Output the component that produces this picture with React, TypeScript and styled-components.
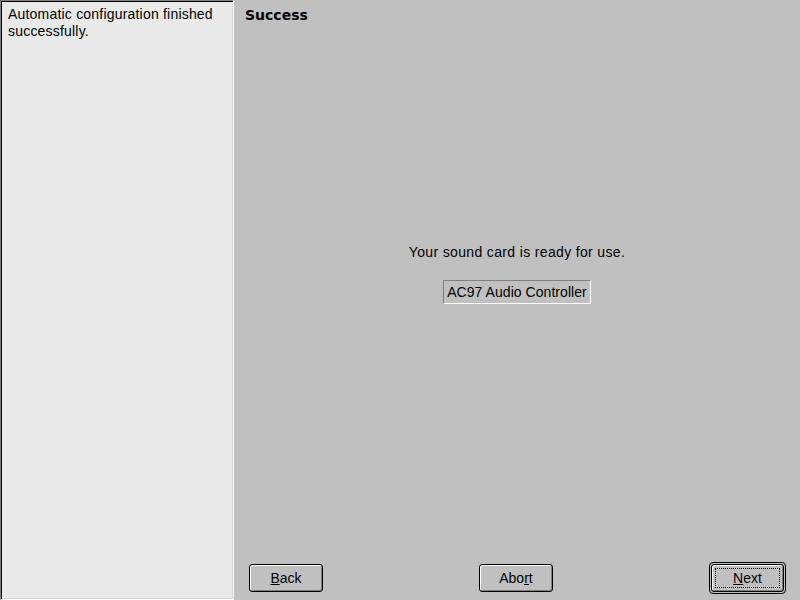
import React from "react";
import styled, { createGlobalStyle } from "styled-components";

const Global = createGlobalStyle`
  html, body { margin: 0; padding: 0; background: #c0c0c0; }
  body { font-family: "Liberation Sans", Arial, sans-serif; font-size: 14px; color: #000; }
`;

const Screen = styled.div`
  display: flex;
  width: 800px;
  height: 600px;
  overflow: hidden;
  background: #c0c0c0;
`;

const HelpPanel = styled.div`
  box-sizing: border-box;
  width: 234px;
  height: 600px;
  flex: none;
  background: #e9e9e9;
  border-top: 1px solid #808080;
  border-left: 1px solid #808080;
  border-bottom: 1px solid #fff;
  border-right: 1px solid #fff;
  box-shadow: inset 1px 1px 0 #000, inset -1px -1px 0 #d4d4d4;
  padding: 5px 7px;
  line-height: 17px;
  font-size: 14px;
  letter-spacing: 0.2px;
`;

const Main = styled.div`
  flex: 1;
  display: flex;
  flex-direction: column;
`;

const Title = styled.div`
  font-family: "DejaVu Sans", "Liberation Sans", sans-serif;
  font-weight: bold;
  font-size: 14px;
  padding: 7px 0 0 11px;
  height: 21px;
`;

const Middle = styled.div`
  flex: 1;
  display: flex;
  flex-direction: column;
  align-items: center;
  justify-content: center;
  padding-bottom: 36px;
  gap: 20px;
`;

const Message = styled.div`
  line-height: 16px;
  letter-spacing: 0.35px;
`;

const Field = styled.div`
  box-sizing: border-box;
  height: 24px;
  padding: 0 3px;
  line-height: 22px;
  border-top: 1px solid #808080;
  border-left: 1px solid #808080;
  border-bottom: 1px solid #fff;
  border-right: 1px solid #fff;
  white-space: nowrap;
  letter-spacing: 0.05px;
`;

const ButtonBar = styled.div`
  display: flex;
  justify-content: space-between;
  align-items: center;
  height: 44px;
  padding: 0 14px 0 15px;
  box-sizing: border-box;
`;

const DefaultRing = styled.div`
  box-sizing: border-box;
  border: 1px solid #000;
  border-radius: 4px;
  padding: 1px;
`;

const Button = styled.button<{ $w: number; $focus?: boolean }>`
  box-sizing: border-box;
  width: ${(p) => p.$w}px;
  height: 28px;
  padding: 0;
  background: #c0c0c0;
  border: 1px solid #000;
  border-radius: 3px;
  box-shadow: inset 1px 1px 0 #fff, inset -1px -1px 0 #808080;
  font-family: "Liberation Sans", Arial, sans-serif;
  font-size: 14px;
  color: #000;
  display: flex;
  align-items: center;
  justify-content: center;
  position: relative;
  &::after {
    content: "";
    display: ${(p) => (p.$focus ? "block" : "none")};
    position: absolute;
    left: 3px;
    top: 3px;
    right: 3px;
    bottom: 3px;
    border: 1px dotted #000;
  }
`;

const Key = styled.span`
  text-decoration: underline;
`;

export default function App() {
  return (
    <>
      <Global />
      <Screen>
        <HelpPanel>
          Automatic configuration finished
          <br />
          successfully.
        </HelpPanel>
        <Main>
          <Title>Success</Title>
          <Middle>
            <Message>Your sound card is ready for use.</Message>
            <Field>AC97 Audio Controller</Field>
          </Middle>
          <ButtonBar>
            <Button $w={74}>
              <span>
                <Key>B</Key>ack
              </span>
            </Button>
            <Button $w={74}>
              <span>
                Abo<Key>r</Key>t
              </span>
            </Button>
            <DefaultRing>
              <Button $w={73} $focus>
                <span>
                  <Key>N</Key>ext
                </span>
              </Button>
            </DefaultRing>
          </ButtonBar>
        </Main>
      </Screen>
    </>
  );
}
